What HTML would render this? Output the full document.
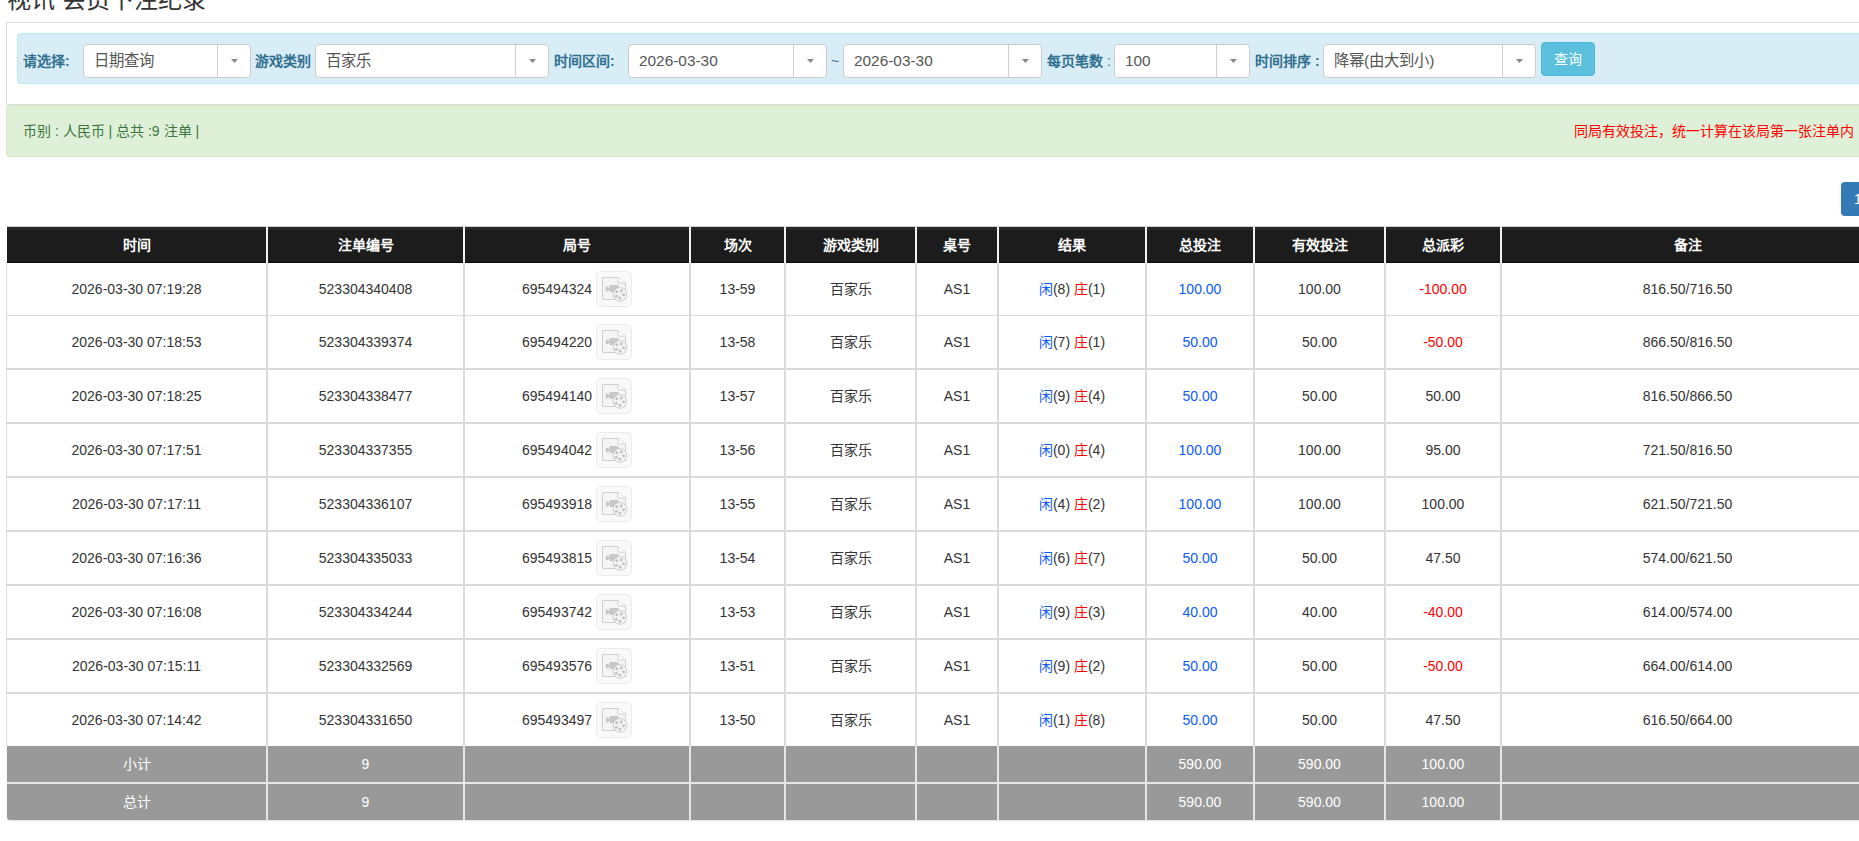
<!DOCTYPE html>
<html lang="zh-CN"><head><meta charset="utf-8"><title>视讯 会员下注纪录</title>
<style>
*{box-sizing:border-box;margin:0;padding:0}
html,body{width:1859px;height:841px;overflow:hidden;background:#fff}
body{font-family:"Liberation Sans",sans-serif;color:#333;font-size:14px;position:relative}
.a{position:absolute;white-space:nowrap}
.title{left:7px;top:-16px;font-size:24px;line-height:32px;color:#333}
.panel{left:6px;top:22px;width:1900px;height:83px;border:1px solid #dcdcdc;border-right:0}
.qbox{left:17px;top:33px;width:1900px;height:51px;background:#d9edf7;border:1px solid #bce8f1;border-radius:4px}
.lab{top:44px;height:34px;line-height:34px;font-size:14px;font-weight:bold;color:#31708f}
.sel{top:44px;height:34px;background:#fff;border:1px solid #cbcbcb;border-radius:4px}
.sel .tx{position:absolute;left:10px;top:0;line-height:32px;font-size:15.4px;color:#555}
.sel .dv{position:absolute;top:0;bottom:0;width:1px;background:#cfcfcf}
.sel .car{position:absolute;top:14px}
.btnq{left:1541px;top:42px;width:54px;height:34px;background:#5bc0de;border:1px solid #46b8da;border-radius:4px;color:#fff;font-size:14px;text-align:center;line-height:32px}
.alert{left:6px;top:105px;width:1900px;height:52px;background:#dff0d8;border:1px solid #d6e9c6;border-radius:4px}
.gtxt{left:23px;top:105px;line-height:52px;font-size:14px;color:#3c763d}
.rtxt{right:5px;top:105px;line-height:52px;font-size:14px;color:#f00}
.pbtn{left:1841px;top:182px;width:60px;height:34px;background:#337ab7;border-radius:4px;color:#fff;font-size:14px;line-height:34px;padding-left:13px}
.c{position:absolute;text-align:center;white-space:nowrap;font-size:14px;color:#333}
.th{color:#fff;font-weight:bold}
.hdr{position:absolute;background:linear-gradient(to bottom,#222 0,#222 1px,#2b2b2b 1px,#2b2b2b 2px,#242424 2px,#242424 3px,#1c1c1c 3px);border-bottom:1px solid #0a0a0a}
.htop{position:absolute;height:1px;background:#d4d4d4}
.hsep{position:absolute;width:2px;background:#f0f0f0}
.vl{position:absolute;width:2px;background:#dadada}
.hl{position:absolute;background:#dadada}
.sum{position:absolute;background:#999;border-radius:0 0 0 3px;box-shadow:0 1px 2px rgba(0,0,0,.12)}
.shl{position:absolute;background:#e6e6e6}
.sc{color:#fff}
.bl{color:#0a5aff}
.rd{color:#f00}
.cj{display:flex;align-items:center;justify-content:center} .ju{line-height:normal}
.ic{display:block;margin-left:4px;flex:none}
</style></head><body>
<div class="a title">视讯 会员下注纪录</div>
<div class="a panel"></div>
<div class="a qbox"></div>
<div class="a lab" style="left:23px">请选择:</div>
<div class="a sel" style="left:83px;width:168px"><span class="tx">日期查询</span><span class="dv" style="left:133px"></span><svg class="car" style="left:147px" width="7" height="4" viewBox="0 0 7 4"><path d="M0 0H7L3.5 4Z" fill="#888"/></svg></div>
<div class="a lab" style="left:255px">游戏类别</div>
<div class="a sel" style="left:315px;width:234px"><span class="tx">百家乐</span><span class="dv" style="left:199px"></span><svg class="car" style="left:213px" width="7" height="4" viewBox="0 0 7 4"><path d="M0 0H7L3.5 4Z" fill="#888"/></svg></div>
<div class="a lab" style="left:554px">时间区间:</div>
<div class="a sel" style="left:628px;width:199px"><span class="tx">2026-03-30</span><span class="dv" style="left:164px"></span><svg class="car" style="left:178px" width="7" height="4" viewBox="0 0 7 4"><path d="M0 0H7L3.5 4Z" fill="#888"/></svg></div>
<div class="a lab" style="left:831px;font-weight:normal">~</div>
<div class="a sel" style="left:843px;width:199px"><span class="tx">2026-03-30</span><span class="dv" style="left:164px"></span><svg class="car" style="left:178px" width="7" height="4" viewBox="0 0 7 4"><path d="M0 0H7L3.5 4Z" fill="#888"/></svg></div>
<div class="a lab" style="left:1047px">每页笔数 <span style="font-weight:normal">:</span></div>
<div class="a sel" style="left:1114px;width:136px"><span class="tx">100</span><span class="dv" style="left:101px"></span><svg class="car" style="left:115px" width="7" height="4" viewBox="0 0 7 4"><path d="M0 0H7L3.5 4Z" fill="#888"/></svg></div>
<div class="a lab" style="left:1255px">时间排序 :</div>
<div class="a sel" style="left:1323px;width:213px"><span class="tx">降幂(由大到小)</span><span class="dv" style="left:178px"></span><svg class="car" style="left:192px" width="7" height="4" viewBox="0 0 7 4"><path d="M0 0H7L3.5 4Z" fill="#888"/></svg></div>
<div class="a btnq">查询</div>
<div class="a alert"></div>
<div class="a gtxt">币别 : 人民币 | 总共 :9 注单 |</div>
<div class="a rtxt">同局有效投注，统一计算在该局第一张注单内</div>
<div class="a pbtn">1</div>
<div class="htop" style="left:7px;top:226px;width:1866px"></div>
<div class="hdr" style="left:7px;top:227px;width:1866px;height:36px"></div>
<div class="hsep" style="left:266px;top:227px;height:36px"></div>
<div class="hsep" style="left:463px;top:227px;height:36px"></div>
<div class="hsep" style="left:689px;top:227px;height:36px"></div>
<div class="hsep" style="left:784px;top:227px;height:36px"></div>
<div class="hsep" style="left:915px;top:227px;height:36px"></div>
<div class="hsep" style="left:997px;top:227px;height:36px"></div>
<div class="hsep" style="left:1145px;top:227px;height:36px"></div>
<div class="hsep" style="left:1253px;top:227px;height:36px"></div>
<div class="hsep" style="left:1384px;top:227px;height:36px"></div>
<div class="hsep" style="left:1500px;top:227px;height:36px"></div>
<div class="c th" style="left:7px;top:227px;width:259px;height:36px;line-height:36px">时间</div>
<div class="c th" style="left:268px;top:227px;width:195px;height:36px;line-height:36px">注单编号</div>
<div class="c th" style="left:465px;top:227px;width:224px;height:36px;line-height:36px">局号</div>
<div class="c th" style="left:691px;top:227px;width:93px;height:36px;line-height:36px">场次</div>
<div class="c th" style="left:786px;top:227px;width:129px;height:36px;line-height:36px">游戏类别</div>
<div class="c th" style="left:917px;top:227px;width:80px;height:36px;line-height:36px">桌号</div>
<div class="c th" style="left:999px;top:227px;width:146px;height:36px;line-height:36px">结果</div>
<div class="c th" style="left:1147px;top:227px;width:106px;height:36px;line-height:36px">总投注</div>
<div class="c th" style="left:1255px;top:227px;width:129px;height:36px;line-height:36px">有效投注</div>
<div class="c th" style="left:1386px;top:227px;width:114px;height:36px;line-height:36px">总派彩</div>
<div class="c th" style="left:1502px;top:227px;width:371px;height:36px;line-height:36px">备注</div>
<div class="vl" style="left:6px;top:263px;height:483px;width:1px"></div>
<div class="vl" style="left:266px;top:263px;height:483px"></div>
<div class="vl" style="left:463px;top:263px;height:483px"></div>
<div class="vl" style="left:689px;top:263px;height:483px"></div>
<div class="vl" style="left:784px;top:263px;height:483px"></div>
<div class="vl" style="left:915px;top:263px;height:483px"></div>
<div class="vl" style="left:997px;top:263px;height:483px"></div>
<div class="vl" style="left:1145px;top:263px;height:483px"></div>
<div class="vl" style="left:1253px;top:263px;height:483px"></div>
<div class="vl" style="left:1384px;top:263px;height:483px"></div>
<div class="vl" style="left:1500px;top:263px;height:483px"></div>
<div class="hl" style="left:6px;top:315px;width:1867px;height:1px"></div>
<div class="c " style="left:7px;top:263px;width:259px;height:52px;line-height:52px">2026-03-30 07:19:28</div>
<div class="c " style="left:268px;top:263px;width:195px;height:52px;line-height:52px">523304340408</div>
<div class="c cj" style="left:465px;top:263px;width:224px;height:52px;line-height:52px"><span class="ju">695494324</span><svg class="ic" width="36" height="36" viewBox="0 0 36 36"><rect x="0.5" y="0.5" width="35" height="35" rx="4.5" fill="#f9f9f9" stroke="#ececec"/><path d="M6.5 6.5H22L29.5 12V28.5H6.5Z" fill="#f5f5f5" stroke="#cfcfcf"/><path d="M22 6.5V12H29.5" fill="#fff" stroke="#cfcfcf"/><path d="M9.8 15L13.5 17V14H22.5V21H13.5V19L9.8 21Z" fill="#c8c8c8"/><circle cx="23.9" cy="23.4" r="6.8" fill="#f7f7f7" stroke="#cccccc"/><circle cx="20.8" cy="20.7" r="1.55" fill="#c2c2c2"/><circle cx="25.3" cy="19.9" r="1.55" fill="#c2c2c2"/><circle cx="27.6" cy="23.7" r="1.55" fill="#c2c2c2"/><circle cx="24" cy="27.1" r="1.55" fill="#c2c2c2"/><circle cx="20.3" cy="25.2" r="1.55" fill="#c2c2c2"/><circle cx="23.8" cy="23.5" r="0.6" fill="#d0d0d0"/></svg></div>
<div class="c " style="left:691px;top:263px;width:93px;height:52px;line-height:52px">13-59</div>
<div class="c " style="left:786px;top:263px;width:129px;height:52px;line-height:52px">百家乐</div>
<div class="c " style="left:917px;top:263px;width:80px;height:52px;line-height:52px">AS1</div>
<div class="c " style="left:999px;top:263px;width:146px;height:52px;line-height:52px"><span class="bl">闲</span>(8) <span class="rd">庄</span>(1)</div>
<div class="c " style="left:1147px;top:263px;width:106px;height:52px;line-height:52px"><span class="bl">100.00</span></div>
<div class="c " style="left:1255px;top:263px;width:129px;height:52px;line-height:52px">100.00</div>
<div class="c " style="left:1386px;top:263px;width:114px;height:52px;line-height:52px"><span class="rd">-100.00</span></div>
<div class="c " style="left:1502px;top:263px;width:371px;height:52px;line-height:52px">816.50/716.50</div>
<div class="hl" style="left:6px;top:368px;width:1867px;height:2px"></div>
<div class="c " style="left:7px;top:316px;width:259px;height:52px;line-height:52px">2026-03-30 07:18:53</div>
<div class="c " style="left:268px;top:316px;width:195px;height:52px;line-height:52px">523304339374</div>
<div class="c cj" style="left:465px;top:316px;width:224px;height:52px;line-height:52px"><span class="ju">695494220</span><svg class="ic" width="36" height="36" viewBox="0 0 36 36"><rect x="0.5" y="0.5" width="35" height="35" rx="4.5" fill="#f9f9f9" stroke="#ececec"/><path d="M6.5 6.5H22L29.5 12V28.5H6.5Z" fill="#f5f5f5" stroke="#cfcfcf"/><path d="M22 6.5V12H29.5" fill="#fff" stroke="#cfcfcf"/><path d="M9.8 15L13.5 17V14H22.5V21H13.5V19L9.8 21Z" fill="#c8c8c8"/><circle cx="23.9" cy="23.4" r="6.8" fill="#f7f7f7" stroke="#cccccc"/><circle cx="20.8" cy="20.7" r="1.55" fill="#c2c2c2"/><circle cx="25.3" cy="19.9" r="1.55" fill="#c2c2c2"/><circle cx="27.6" cy="23.7" r="1.55" fill="#c2c2c2"/><circle cx="24" cy="27.1" r="1.55" fill="#c2c2c2"/><circle cx="20.3" cy="25.2" r="1.55" fill="#c2c2c2"/><circle cx="23.8" cy="23.5" r="0.6" fill="#d0d0d0"/></svg></div>
<div class="c " style="left:691px;top:316px;width:93px;height:52px;line-height:52px">13-58</div>
<div class="c " style="left:786px;top:316px;width:129px;height:52px;line-height:52px">百家乐</div>
<div class="c " style="left:917px;top:316px;width:80px;height:52px;line-height:52px">AS1</div>
<div class="c " style="left:999px;top:316px;width:146px;height:52px;line-height:52px"><span class="bl">闲</span>(7) <span class="rd">庄</span>(1)</div>
<div class="c " style="left:1147px;top:316px;width:106px;height:52px;line-height:52px"><span class="bl">50.00</span></div>
<div class="c " style="left:1255px;top:316px;width:129px;height:52px;line-height:52px">50.00</div>
<div class="c " style="left:1386px;top:316px;width:114px;height:52px;line-height:52px"><span class="rd">-50.00</span></div>
<div class="c " style="left:1502px;top:316px;width:371px;height:52px;line-height:52px">866.50/816.50</div>
<div class="hl" style="left:6px;top:422px;width:1867px;height:2px"></div>
<div class="c " style="left:7px;top:370px;width:259px;height:52px;line-height:52px">2026-03-30 07:18:25</div>
<div class="c " style="left:268px;top:370px;width:195px;height:52px;line-height:52px">523304338477</div>
<div class="c cj" style="left:465px;top:370px;width:224px;height:52px;line-height:52px"><span class="ju">695494140</span><svg class="ic" width="36" height="36" viewBox="0 0 36 36"><rect x="0.5" y="0.5" width="35" height="35" rx="4.5" fill="#f9f9f9" stroke="#ececec"/><path d="M6.5 6.5H22L29.5 12V28.5H6.5Z" fill="#f5f5f5" stroke="#cfcfcf"/><path d="M22 6.5V12H29.5" fill="#fff" stroke="#cfcfcf"/><path d="M9.8 15L13.5 17V14H22.5V21H13.5V19L9.8 21Z" fill="#c8c8c8"/><circle cx="23.9" cy="23.4" r="6.8" fill="#f7f7f7" stroke="#cccccc"/><circle cx="20.8" cy="20.7" r="1.55" fill="#c2c2c2"/><circle cx="25.3" cy="19.9" r="1.55" fill="#c2c2c2"/><circle cx="27.6" cy="23.7" r="1.55" fill="#c2c2c2"/><circle cx="24" cy="27.1" r="1.55" fill="#c2c2c2"/><circle cx="20.3" cy="25.2" r="1.55" fill="#c2c2c2"/><circle cx="23.8" cy="23.5" r="0.6" fill="#d0d0d0"/></svg></div>
<div class="c " style="left:691px;top:370px;width:93px;height:52px;line-height:52px">13-57</div>
<div class="c " style="left:786px;top:370px;width:129px;height:52px;line-height:52px">百家乐</div>
<div class="c " style="left:917px;top:370px;width:80px;height:52px;line-height:52px">AS1</div>
<div class="c " style="left:999px;top:370px;width:146px;height:52px;line-height:52px"><span class="bl">闲</span>(9) <span class="rd">庄</span>(4)</div>
<div class="c " style="left:1147px;top:370px;width:106px;height:52px;line-height:52px"><span class="bl">50.00</span></div>
<div class="c " style="left:1255px;top:370px;width:129px;height:52px;line-height:52px">50.00</div>
<div class="c " style="left:1386px;top:370px;width:114px;height:52px;line-height:52px">50.00</div>
<div class="c " style="left:1502px;top:370px;width:371px;height:52px;line-height:52px">816.50/866.50</div>
<div class="hl" style="left:6px;top:476px;width:1867px;height:2px"></div>
<div class="c " style="left:7px;top:424px;width:259px;height:52px;line-height:52px">2026-03-30 07:17:51</div>
<div class="c " style="left:268px;top:424px;width:195px;height:52px;line-height:52px">523304337355</div>
<div class="c cj" style="left:465px;top:424px;width:224px;height:52px;line-height:52px"><span class="ju">695494042</span><svg class="ic" width="36" height="36" viewBox="0 0 36 36"><rect x="0.5" y="0.5" width="35" height="35" rx="4.5" fill="#f9f9f9" stroke="#ececec"/><path d="M6.5 6.5H22L29.5 12V28.5H6.5Z" fill="#f5f5f5" stroke="#cfcfcf"/><path d="M22 6.5V12H29.5" fill="#fff" stroke="#cfcfcf"/><path d="M9.8 15L13.5 17V14H22.5V21H13.5V19L9.8 21Z" fill="#c8c8c8"/><circle cx="23.9" cy="23.4" r="6.8" fill="#f7f7f7" stroke="#cccccc"/><circle cx="20.8" cy="20.7" r="1.55" fill="#c2c2c2"/><circle cx="25.3" cy="19.9" r="1.55" fill="#c2c2c2"/><circle cx="27.6" cy="23.7" r="1.55" fill="#c2c2c2"/><circle cx="24" cy="27.1" r="1.55" fill="#c2c2c2"/><circle cx="20.3" cy="25.2" r="1.55" fill="#c2c2c2"/><circle cx="23.8" cy="23.5" r="0.6" fill="#d0d0d0"/></svg></div>
<div class="c " style="left:691px;top:424px;width:93px;height:52px;line-height:52px">13-56</div>
<div class="c " style="left:786px;top:424px;width:129px;height:52px;line-height:52px">百家乐</div>
<div class="c " style="left:917px;top:424px;width:80px;height:52px;line-height:52px">AS1</div>
<div class="c " style="left:999px;top:424px;width:146px;height:52px;line-height:52px"><span class="bl">闲</span>(0) <span class="rd">庄</span>(4)</div>
<div class="c " style="left:1147px;top:424px;width:106px;height:52px;line-height:52px"><span class="bl">100.00</span></div>
<div class="c " style="left:1255px;top:424px;width:129px;height:52px;line-height:52px">100.00</div>
<div class="c " style="left:1386px;top:424px;width:114px;height:52px;line-height:52px">95.00</div>
<div class="c " style="left:1502px;top:424px;width:371px;height:52px;line-height:52px">721.50/816.50</div>
<div class="hl" style="left:6px;top:530px;width:1867px;height:2px"></div>
<div class="c " style="left:7px;top:478px;width:259px;height:52px;line-height:52px">2026-03-30 07:17:11</div>
<div class="c " style="left:268px;top:478px;width:195px;height:52px;line-height:52px">523304336107</div>
<div class="c cj" style="left:465px;top:478px;width:224px;height:52px;line-height:52px"><span class="ju">695493918</span><svg class="ic" width="36" height="36" viewBox="0 0 36 36"><rect x="0.5" y="0.5" width="35" height="35" rx="4.5" fill="#f9f9f9" stroke="#ececec"/><path d="M6.5 6.5H22L29.5 12V28.5H6.5Z" fill="#f5f5f5" stroke="#cfcfcf"/><path d="M22 6.5V12H29.5" fill="#fff" stroke="#cfcfcf"/><path d="M9.8 15L13.5 17V14H22.5V21H13.5V19L9.8 21Z" fill="#c8c8c8"/><circle cx="23.9" cy="23.4" r="6.8" fill="#f7f7f7" stroke="#cccccc"/><circle cx="20.8" cy="20.7" r="1.55" fill="#c2c2c2"/><circle cx="25.3" cy="19.9" r="1.55" fill="#c2c2c2"/><circle cx="27.6" cy="23.7" r="1.55" fill="#c2c2c2"/><circle cx="24" cy="27.1" r="1.55" fill="#c2c2c2"/><circle cx="20.3" cy="25.2" r="1.55" fill="#c2c2c2"/><circle cx="23.8" cy="23.5" r="0.6" fill="#d0d0d0"/></svg></div>
<div class="c " style="left:691px;top:478px;width:93px;height:52px;line-height:52px">13-55</div>
<div class="c " style="left:786px;top:478px;width:129px;height:52px;line-height:52px">百家乐</div>
<div class="c " style="left:917px;top:478px;width:80px;height:52px;line-height:52px">AS1</div>
<div class="c " style="left:999px;top:478px;width:146px;height:52px;line-height:52px"><span class="bl">闲</span>(4) <span class="rd">庄</span>(2)</div>
<div class="c " style="left:1147px;top:478px;width:106px;height:52px;line-height:52px"><span class="bl">100.00</span></div>
<div class="c " style="left:1255px;top:478px;width:129px;height:52px;line-height:52px">100.00</div>
<div class="c " style="left:1386px;top:478px;width:114px;height:52px;line-height:52px">100.00</div>
<div class="c " style="left:1502px;top:478px;width:371px;height:52px;line-height:52px">621.50/721.50</div>
<div class="hl" style="left:6px;top:584px;width:1867px;height:2px"></div>
<div class="c " style="left:7px;top:532px;width:259px;height:52px;line-height:52px">2026-03-30 07:16:36</div>
<div class="c " style="left:268px;top:532px;width:195px;height:52px;line-height:52px">523304335033</div>
<div class="c cj" style="left:465px;top:532px;width:224px;height:52px;line-height:52px"><span class="ju">695493815</span><svg class="ic" width="36" height="36" viewBox="0 0 36 36"><rect x="0.5" y="0.5" width="35" height="35" rx="4.5" fill="#f9f9f9" stroke="#ececec"/><path d="M6.5 6.5H22L29.5 12V28.5H6.5Z" fill="#f5f5f5" stroke="#cfcfcf"/><path d="M22 6.5V12H29.5" fill="#fff" stroke="#cfcfcf"/><path d="M9.8 15L13.5 17V14H22.5V21H13.5V19L9.8 21Z" fill="#c8c8c8"/><circle cx="23.9" cy="23.4" r="6.8" fill="#f7f7f7" stroke="#cccccc"/><circle cx="20.8" cy="20.7" r="1.55" fill="#c2c2c2"/><circle cx="25.3" cy="19.9" r="1.55" fill="#c2c2c2"/><circle cx="27.6" cy="23.7" r="1.55" fill="#c2c2c2"/><circle cx="24" cy="27.1" r="1.55" fill="#c2c2c2"/><circle cx="20.3" cy="25.2" r="1.55" fill="#c2c2c2"/><circle cx="23.8" cy="23.5" r="0.6" fill="#d0d0d0"/></svg></div>
<div class="c " style="left:691px;top:532px;width:93px;height:52px;line-height:52px">13-54</div>
<div class="c " style="left:786px;top:532px;width:129px;height:52px;line-height:52px">百家乐</div>
<div class="c " style="left:917px;top:532px;width:80px;height:52px;line-height:52px">AS1</div>
<div class="c " style="left:999px;top:532px;width:146px;height:52px;line-height:52px"><span class="bl">闲</span>(6) <span class="rd">庄</span>(7)</div>
<div class="c " style="left:1147px;top:532px;width:106px;height:52px;line-height:52px"><span class="bl">50.00</span></div>
<div class="c " style="left:1255px;top:532px;width:129px;height:52px;line-height:52px">50.00</div>
<div class="c " style="left:1386px;top:532px;width:114px;height:52px;line-height:52px">47.50</div>
<div class="c " style="left:1502px;top:532px;width:371px;height:52px;line-height:52px">574.00/621.50</div>
<div class="hl" style="left:6px;top:638px;width:1867px;height:2px"></div>
<div class="c " style="left:7px;top:586px;width:259px;height:52px;line-height:52px">2026-03-30 07:16:08</div>
<div class="c " style="left:268px;top:586px;width:195px;height:52px;line-height:52px">523304334244</div>
<div class="c cj" style="left:465px;top:586px;width:224px;height:52px;line-height:52px"><span class="ju">695493742</span><svg class="ic" width="36" height="36" viewBox="0 0 36 36"><rect x="0.5" y="0.5" width="35" height="35" rx="4.5" fill="#f9f9f9" stroke="#ececec"/><path d="M6.5 6.5H22L29.5 12V28.5H6.5Z" fill="#f5f5f5" stroke="#cfcfcf"/><path d="M22 6.5V12H29.5" fill="#fff" stroke="#cfcfcf"/><path d="M9.8 15L13.5 17V14H22.5V21H13.5V19L9.8 21Z" fill="#c8c8c8"/><circle cx="23.9" cy="23.4" r="6.8" fill="#f7f7f7" stroke="#cccccc"/><circle cx="20.8" cy="20.7" r="1.55" fill="#c2c2c2"/><circle cx="25.3" cy="19.9" r="1.55" fill="#c2c2c2"/><circle cx="27.6" cy="23.7" r="1.55" fill="#c2c2c2"/><circle cx="24" cy="27.1" r="1.55" fill="#c2c2c2"/><circle cx="20.3" cy="25.2" r="1.55" fill="#c2c2c2"/><circle cx="23.8" cy="23.5" r="0.6" fill="#d0d0d0"/></svg></div>
<div class="c " style="left:691px;top:586px;width:93px;height:52px;line-height:52px">13-53</div>
<div class="c " style="left:786px;top:586px;width:129px;height:52px;line-height:52px">百家乐</div>
<div class="c " style="left:917px;top:586px;width:80px;height:52px;line-height:52px">AS1</div>
<div class="c " style="left:999px;top:586px;width:146px;height:52px;line-height:52px"><span class="bl">闲</span>(9) <span class="rd">庄</span>(3)</div>
<div class="c " style="left:1147px;top:586px;width:106px;height:52px;line-height:52px"><span class="bl">40.00</span></div>
<div class="c " style="left:1255px;top:586px;width:129px;height:52px;line-height:52px">40.00</div>
<div class="c " style="left:1386px;top:586px;width:114px;height:52px;line-height:52px"><span class="rd">-40.00</span></div>
<div class="c " style="left:1502px;top:586px;width:371px;height:52px;line-height:52px">614.00/574.00</div>
<div class="hl" style="left:6px;top:692px;width:1867px;height:2px"></div>
<div class="c " style="left:7px;top:640px;width:259px;height:52px;line-height:52px">2026-03-30 07:15:11</div>
<div class="c " style="left:268px;top:640px;width:195px;height:52px;line-height:52px">523304332569</div>
<div class="c cj" style="left:465px;top:640px;width:224px;height:52px;line-height:52px"><span class="ju">695493576</span><svg class="ic" width="36" height="36" viewBox="0 0 36 36"><rect x="0.5" y="0.5" width="35" height="35" rx="4.5" fill="#f9f9f9" stroke="#ececec"/><path d="M6.5 6.5H22L29.5 12V28.5H6.5Z" fill="#f5f5f5" stroke="#cfcfcf"/><path d="M22 6.5V12H29.5" fill="#fff" stroke="#cfcfcf"/><path d="M9.8 15L13.5 17V14H22.5V21H13.5V19L9.8 21Z" fill="#c8c8c8"/><circle cx="23.9" cy="23.4" r="6.8" fill="#f7f7f7" stroke="#cccccc"/><circle cx="20.8" cy="20.7" r="1.55" fill="#c2c2c2"/><circle cx="25.3" cy="19.9" r="1.55" fill="#c2c2c2"/><circle cx="27.6" cy="23.7" r="1.55" fill="#c2c2c2"/><circle cx="24" cy="27.1" r="1.55" fill="#c2c2c2"/><circle cx="20.3" cy="25.2" r="1.55" fill="#c2c2c2"/><circle cx="23.8" cy="23.5" r="0.6" fill="#d0d0d0"/></svg></div>
<div class="c " style="left:691px;top:640px;width:93px;height:52px;line-height:52px">13-51</div>
<div class="c " style="left:786px;top:640px;width:129px;height:52px;line-height:52px">百家乐</div>
<div class="c " style="left:917px;top:640px;width:80px;height:52px;line-height:52px">AS1</div>
<div class="c " style="left:999px;top:640px;width:146px;height:52px;line-height:52px"><span class="bl">闲</span>(9) <span class="rd">庄</span>(2)</div>
<div class="c " style="left:1147px;top:640px;width:106px;height:52px;line-height:52px"><span class="bl">50.00</span></div>
<div class="c " style="left:1255px;top:640px;width:129px;height:52px;line-height:52px">50.00</div>
<div class="c " style="left:1386px;top:640px;width:114px;height:52px;line-height:52px"><span class="rd">-50.00</span></div>
<div class="c " style="left:1502px;top:640px;width:371px;height:52px;line-height:52px">664.00/614.00</div>
<div class="c " style="left:7px;top:694px;width:259px;height:52px;line-height:52px">2026-03-30 07:14:42</div>
<div class="c " style="left:268px;top:694px;width:195px;height:52px;line-height:52px">523304331650</div>
<div class="c cj" style="left:465px;top:694px;width:224px;height:52px;line-height:52px"><span class="ju">695493497</span><svg class="ic" width="36" height="36" viewBox="0 0 36 36"><rect x="0.5" y="0.5" width="35" height="35" rx="4.5" fill="#f9f9f9" stroke="#ececec"/><path d="M6.5 6.5H22L29.5 12V28.5H6.5Z" fill="#f5f5f5" stroke="#cfcfcf"/><path d="M22 6.5V12H29.5" fill="#fff" stroke="#cfcfcf"/><path d="M9.8 15L13.5 17V14H22.5V21H13.5V19L9.8 21Z" fill="#c8c8c8"/><circle cx="23.9" cy="23.4" r="6.8" fill="#f7f7f7" stroke="#cccccc"/><circle cx="20.8" cy="20.7" r="1.55" fill="#c2c2c2"/><circle cx="25.3" cy="19.9" r="1.55" fill="#c2c2c2"/><circle cx="27.6" cy="23.7" r="1.55" fill="#c2c2c2"/><circle cx="24" cy="27.1" r="1.55" fill="#c2c2c2"/><circle cx="20.3" cy="25.2" r="1.55" fill="#c2c2c2"/><circle cx="23.8" cy="23.5" r="0.6" fill="#d0d0d0"/></svg></div>
<div class="c " style="left:691px;top:694px;width:93px;height:52px;line-height:52px">13-50</div>
<div class="c " style="left:786px;top:694px;width:129px;height:52px;line-height:52px">百家乐</div>
<div class="c " style="left:917px;top:694px;width:80px;height:52px;line-height:52px">AS1</div>
<div class="c " style="left:999px;top:694px;width:146px;height:52px;line-height:52px"><span class="bl">闲</span>(1) <span class="rd">庄</span>(8)</div>
<div class="c " style="left:1147px;top:694px;width:106px;height:52px;line-height:52px"><span class="bl">50.00</span></div>
<div class="c " style="left:1255px;top:694px;width:129px;height:52px;line-height:52px">50.00</div>
<div class="c " style="left:1386px;top:694px;width:114px;height:52px;line-height:52px">47.50</div>
<div class="c " style="left:1502px;top:694px;width:371px;height:52px;line-height:52px">616.50/664.00</div>
<div class="sum" style="left:7px;top:746px;width:1866px;height:74px"></div>
<div class="shl" style="left:7px;top:782px;width:1866px;height:2px"></div>
<div class="shl" style="left:266px;top:746px;width:2px;height:74px"></div>
<div class="shl" style="left:463px;top:746px;width:2px;height:74px"></div>
<div class="shl" style="left:689px;top:746px;width:2px;height:74px"></div>
<div class="shl" style="left:784px;top:746px;width:2px;height:74px"></div>
<div class="shl" style="left:915px;top:746px;width:2px;height:74px"></div>
<div class="shl" style="left:997px;top:746px;width:2px;height:74px"></div>
<div class="shl" style="left:1145px;top:746px;width:2px;height:74px"></div>
<div class="shl" style="left:1253px;top:746px;width:2px;height:74px"></div>
<div class="shl" style="left:1384px;top:746px;width:2px;height:74px"></div>
<div class="shl" style="left:1500px;top:746px;width:2px;height:74px"></div>
<div class="c sc" style="left:7px;top:746px;width:259px;height:36px;line-height:36px">小计</div>
<div class="c sc" style="left:268px;top:746px;width:195px;height:36px;line-height:36px">9</div>
<div class="c sc" style="left:1147px;top:746px;width:106px;height:36px;line-height:36px">590.00</div>
<div class="c sc" style="left:1255px;top:746px;width:129px;height:36px;line-height:36px">590.00</div>
<div class="c sc" style="left:1386px;top:746px;width:114px;height:36px;line-height:36px">100.00</div>
<div class="c sc" style="left:7px;top:784px;width:259px;height:36px;line-height:36px">总计</div>
<div class="c sc" style="left:268px;top:784px;width:195px;height:36px;line-height:36px">9</div>
<div class="c sc" style="left:1147px;top:784px;width:106px;height:36px;line-height:36px">590.00</div>
<div class="c sc" style="left:1255px;top:784px;width:129px;height:36px;line-height:36px">590.00</div>
<div class="c sc" style="left:1386px;top:784px;width:114px;height:36px;line-height:36px">100.00</div>
</body></html>
